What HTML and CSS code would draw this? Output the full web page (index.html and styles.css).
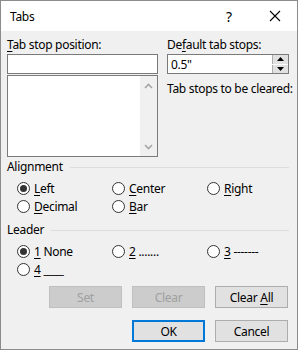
FILE: index.html
```html
<!DOCTYPE html>
<html lang="en">
<head>
  <meta charset="UTF-8">
  <title>Tabs</title>
  <link rel="stylesheet" href="styles.css">
</head>
<body>
  <div class="dialog">
    <div class="titlebar">
      <span class="title">Tabs</span>
      <span class="help">?</span>
      <span class="close">
        <svg width="12" height="12" viewBox="0 0 12 12"><path d="M1 1 L11 11 M11 1 L1 11" stroke="#000" stroke-width="1.1" fill="none"/></svg>
      </span>
    </div>
    <div class="content">
      <div class="top">
        <div class="col-left">
          <div class="label"><u>T</u>ab stop position:</div>
          <div class="textbox"></div>
          <div class="listbox">
            <div class="scrollbar">
              <svg width="9" height="6" viewBox="0 0 9 6"><path d="M1 5 L4.5 1.5 L8 5" stroke="#a6a6a6" stroke-width="1.6" fill="none"/></svg>
              <svg width="9" height="6" viewBox="0 0 9 6"><path d="M1 1 L4.5 4.5 L8 1" stroke="#a6a6a6" stroke-width="1.6" fill="none"/></svg>
            </div>
          </div>
        </div>
        <div class="col-right">
          <div class="label">De<u>f</u>ault tab stops:</div>
          <div class="textbox spinbox">
            <span class="value">0.5"</span>
            <div class="spin">
              <div class="spin-btn"><svg width="7" height="4" viewBox="0 0 7 4"><path d="M0 4 L3.5 0 L7 4 Z" fill="#000"/></svg></div>
              <div class="spin-btn"><svg width="7" height="4" viewBox="0 0 7 4"><path d="M0 0 L3.5 4 L7 0 Z" fill="#000"/></svg></div>
            </div>
          </div>
          <div class="label cleared">Tab stops to be cleared:</div>
        </div>
      </div>

      <div class="group-label">Alignment</div>
      <div class="radios">
        <div class="radio checked"><span class="dot"></span><u>L</u>eft</div>
        <div class="radio"><span class="dot"></span><u>C</u>enter</div>
        <div class="radio"><span class="dot"></span><u>R</u>ight</div>
        <div class="radio"><span class="dot"></span><u>D</u>ecimal</div>
        <div class="radio"><span class="dot"></span><u>B</u>ar</div>
      </div>

      <div class="group-label leader">Leader</div>
      <div class="radios">
        <div class="radio checked"><span class="dot"></span><u>1</u>&nbsp;None</div>
        <div class="radio"><span class="dot"></span><u>2</u>&nbsp;.......</div>
        <div class="radio"><span class="dot"></span><u>3</u>&nbsp;-------</div>
        <div class="radio"><span class="dot"></span><u>4</u>&nbsp;____</div>
      </div>

      <div class="buttons">
        <button class="btn" disabled>Set</button>
        <button class="btn" disabled>Clear</button>
        <button class="btn">Clear <u>A</u>ll</button>
      </div>
      <div class="buttons bottom">
        <button class="btn default">OK</button>
        <button class="btn">Cancel</button>
      </div>
    </div>
  </div>
</body>
</html>
```

FILE: styles.css
```css
* {margin: 0; padding: 0; box-sizing: border-box;}

body {
  font-family: "Noto Sans", "Open Sans", sans-serif;
  font-size: 12px;
  letter-spacing: -0.3px;
  color: #000;
  background: #fff;
}
u {
  text-decoration: underline;
  text-underline-offset: 2px;
}

.dialog {
  width: 298px;
  height: 350px;
  border: 1px solid #8c8c8c;
  background: #f0f0f0;
  display: flex;
  flex-direction: column;
}

.titlebar {
  height: 30px;
  background: #fff;
  display: flex;
  align-items: center;
  padding-left: 9px;
}
.title {
  flex: 1;
}
.help {
  width: 46px;
  text-align: center;
  font-size: 14px;
  padding-left: 2px;
}
.close {
  width: 46px;
  display: flex;
  justify-content: center;
  padding-left: 2px;
}

.content {
  flex: 1;
  padding: 0 8px 0 6px;
}

.top {
  display: flex;
  gap: 9px;
}
.col-left {
  width: 152px;
}
.col-right {
  width: 122px;
}
.label {
  line-height: 16px;
  margin-top: 6px;
  white-space: nowrap;
}
.label.cleared {
  margin-top: 7px;
}
.textbox {
  height: 20px;
  margin-top: 1px;
  background: #fff;
  border: 1px solid #7a7a7a;
}
.spinbox {
  display: flex;
  align-items: center;
  padding-left: 3px;
}
.spinbox .value {
  flex: 1;
}
.spin {
  width: 16px;
  height: 18px;
  display: flex;
  flex-direction: column;
  gap: 1px;
  background: #fff;
}
.spin-btn {
  flex: 1;
  background: #e1e1e1;
  border-left: 1px solid #adadad;
  display: flex;
  align-items: center;
  justify-content: center;
}
.listbox {
  height: 82px;
  margin-top: 1px;
  background: #fff;
  border: 1px solid #7a7a7a;
  display: flex;
  justify-content: flex-end;
}
.scrollbar {
  width: 17px;
  background: #f0f0f0;
  display: flex;
  flex-direction: column;
  justify-content: space-between;
  align-items: center;
  padding: 7px 0 6px;
}

.group-label {
  display: flex;
  align-items: center;
  line-height: 16px;
  margin-top: 2px;
}
.group-label::after {
  content: "";
  flex: 1;
  height: 1px;
  background: #dcdcdc;
  margin-left: 7px;
}
.group-label.leader {
  margin-top: 7px;
}

.radios {
  display: grid;
  grid-template-columns: 95px 95px 1fr;
  padding-left: 10px;
  margin-top: 4px;
}
.radio {
  height: 18px;
  display: flex;
  align-items: center;
}
.dot {
  width: 13px;
  height: 13px;
  border: 1px solid #333;
  border-radius: 50%;
  background: #fff;
  margin-right: 4px;
  display: flex;
  align-items: center;
  justify-content: center;
}
.radio.checked .dot::after {
  content: "";
  width: 7px;
  height: 7px;
  border-radius: 50%;
  background: #333;
}

.buttons {
  display: flex;
  justify-content: flex-end;
  gap: 10px;
  margin-top: 8px;
  padding-right: 1px;
}
.buttons.bottom {
  margin-top: 12px;
}
.btn {
  width: 73px;
  height: 22px;
  font: inherit;
  letter-spacing: inherit;
  color: #000;
  background: #e1e1e1;
  border: 1px solid #adadad;
}
.btn:disabled {
  background: #cccccc;
  border-color: #bfbfbf;
  color: #a0a0a0;
}
.btn.default {
  border: 2px solid #0078d7;
}
```
